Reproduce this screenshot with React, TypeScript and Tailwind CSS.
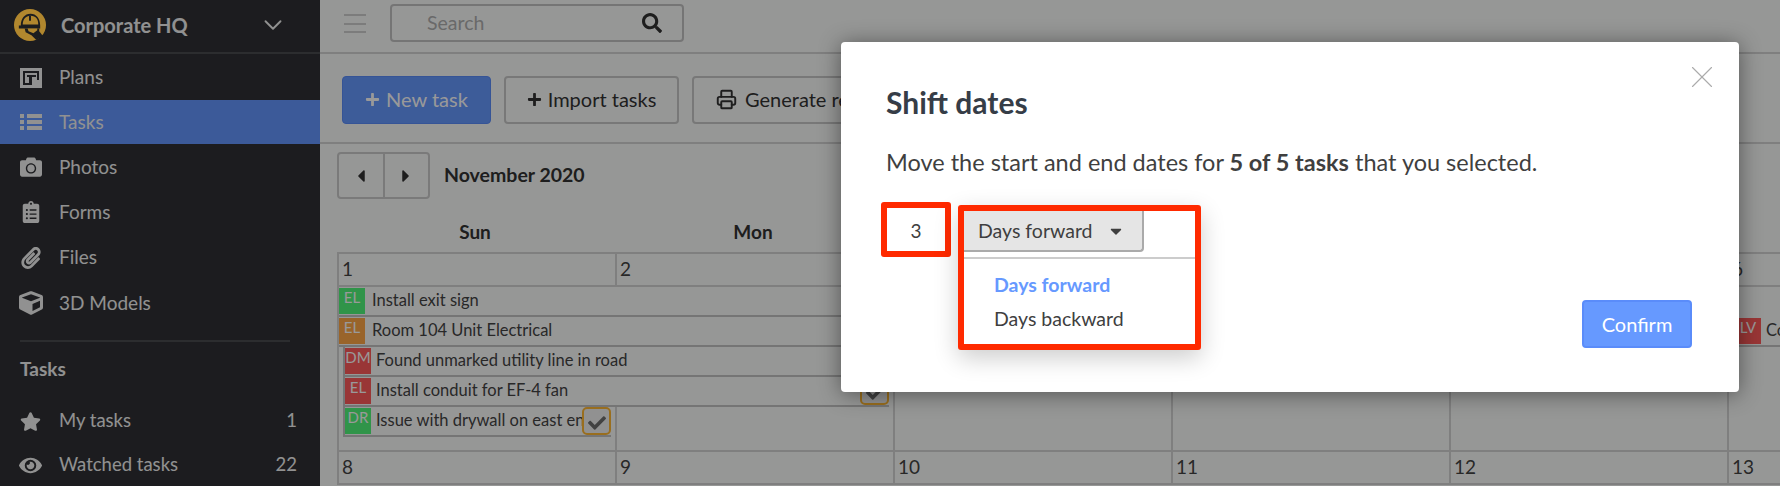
import { ChevronDown, Printer, X } from "lucide-react";
import {
  FaCamera,
  FaCaretDown,
  FaCaretLeft,
  FaCaretRight,
  FaCheck,
  FaClipboardList,
  FaCube,
  FaEye,
  FaPaperclip,
  FaPlus,
  FaSearch,
  FaStar,
} from "react-icons/fa";

function PlansIcon() {
  return (
    <svg width="22" height="20" viewBox="0 0 22 20">
      <rect width="22" height="20" fill="currentColor" />
      <path fill="#2f3034" d="M3 3h16v9h-2V5H5v10h4V9H7V7h9v2h-4v8H3z" />
    </svg>
  );
}

function ListIcon() {
  return (
    <svg width="22" height="16" viewBox="0 0 22 16" fill="currentColor">
      <rect y="0" width="4" height="4" />
      <rect y="6" width="4" height="4" />
      <rect y="12" width="4" height="4" />
      <rect x="7" y="0" width="15" height="4" />
      <rect x="7" y="6" width="15" height="4" />
      <rect x="7" y="12" width="15" height="4" />
    </svg>
  );
}

function Logo() {
  return (
    <svg width="32" height="32" viewBox="0 0 33 33" className="relative z-10 shrink-0">
      <circle cx="16.5" cy="16.5" r="16.5" fill="#b1872e" />
      <path fill="#1c1d1f" d="M7 17c0-7 4-12 10-12s10 5 10 12v3H5v-3z" />
      <path fill="#b1872e" d="M9 16c0-5 3-9 8-9 6 0 8 4 8 9z" />
      <path fill="#1c1d1f" d="M15.5 7h2v5h-2z" />
      <path fill="#1c1d1f" d="M11 20h15v3l4 5-7 4-5-5-6-3z" />
      <path fill="#b1872e" d="M14 20h10v2l-4 3-5-2z" />
    </svg>
  );
}

const navItems = [
  { label: "Plans", icon: <PlansIcon />, height: "h-[45px]" },
  { label: "Tasks", icon: <ListIcon />, height: "h-[44px] bg-[#6496ff]" },
  { label: "Photos", icon: <FaCamera size={22} />, height: "h-[45.5px]" },
  { label: "Forms", icon: <FaClipboardList size={22} />, height: "h-[45.5px]" },
  { label: "Files", icon: <FaPaperclip size={22} />, height: "h-[45px]" },
  { label: "3D Models", icon: <FaCube size={24} />, height: "h-[45.5px]" },
];

function Sidebar() {
  return (
    <aside className="w-[320px] shrink-0 bg-[#2f3034] text-[#f2f2f2]">
      <div className="flex h-[54px] items-center border-b-2 border-[#4a4b4f] pb-[3px] pl-[14px] pr-[32px]">
        <Logo />
        <span className="ml-[15px] flex-1 text-[20px] font-bold">Corporate HQ</span>
        <ChevronDown size={30} strokeWidth={1.5} />
      </div>
      <nav className="pt-[1px]">
        {navItems.map((item) => (
          <div key={item.label} className={"flex items-center " + item.height}>
            <span className="flex w-[59px] shrink-0 justify-center pl-[2px]">{item.icon}</span>
            <span className="text-[19px]">{item.label}</span>
          </div>
        ))}
      </nav>
      <div className="mx-[20px] mt-[14px] w-[270px] border-t-2 border-[#4a4b4f]" />
      <div className="pl-[20px] pt-[13px] text-[19px] font-bold">Tasks</div>
      <div className="pt-[16px]">
        <div className="flex h-[44px] items-center pr-[23px]">
          <span className="flex w-[59px] shrink-0 justify-center pl-[2px]">
            <FaStar size={21} />
          </span>
          <span className="flex-1 text-[18.5px]">My tasks</span>
          <span className="text-[18.5px]">1</span>
        </div>
        <div className="flex h-[44px] items-center pr-[23px]">
          <span className="flex w-[59px] shrink-0 justify-center pl-[2px]">
            <FaEye size={23} />
          </span>
          <span className="flex-1 text-[18.5px]">Watched tasks</span>
          <span className="text-[18.5px]">22</span>
        </div>
      </div>
    </aside>
  );
}

function Topbar() {
  return (
    <div className="flex h-[54px] items-start border-b-2 border-[#d4d4d4] pl-[24px] pt-[4px]">
      <div className="mt-[10px] flex h-[19px] w-[22px] flex-col justify-between">
        <div className="h-[2px] bg-[#cfcfcf]" />
        <div className="h-[2px] bg-[#cfcfcf]" />
        <div className="h-[2px] bg-[#cfcfcf]" />
      </div>
      <div className="ml-[24px] flex h-[38px] w-[294px] items-center justify-between rounded-[4px] border-2 border-[#c4c4c4] pl-[35px] pr-[20px]">
        <span className="text-[19.5px] text-[#b0b0b0]">Search</span>
        <FaSearch size={20} className="text-[#333333]" />
      </div>
    </div>
  );
}

function Toolbar() {
  return (
    <div className="flex h-[90px] items-start gap-[13px] border-b-2 border-[#d4d4d4] pl-[22px] pt-[22px]">
      <button className="flex h-[48px] w-[149px] items-center justify-center gap-[6px] rounded-[4px] border border-[#5a8cfa] bg-[#6699ff] pb-[2px] text-[20px] text-white">
        <FaPlus size={15} />
        New task
      </button>
      <button className="flex h-[48px] w-[175px] items-center justify-center gap-[6px] rounded-[4px] border-2 border-[#c8c8c8] pb-[2px] text-[20px] text-[#333333]">
        <FaPlus size={15} />
        Import tasks
      </button>
      <button className="flex h-[48px] w-[240px] shrink-0 items-center gap-[8px] rounded-[4px] border-2 border-[#c8c8c8] pb-[2px] pl-[22px] text-[20px] text-[#333333]">
        <Printer size={21} strokeWidth={2.2} />
        Generate report
      </button>
    </div>
  );
}

const firstWeekCells = [1, 2, 3, 4, 5, 6];
const secondWeek = [8, 9, 10, 11, 12, 13];
const days = ["Sun", "Mon", "Tue", "Wed", "Thu", "Fri"];

const cellColumns = [
  "col-start-1",
  "col-start-2",
  "col-start-3",
  "col-start-4",
  "col-start-5",
  "col-start-6",
];

const tasks = [
  { code: "EL", color: "bg-[#50f77b]", name: "Install exit sign", span: "col-start-1 col-span-3 row-start-1" },
  { code: "EL", color: "bg-[#ffa746]", name: "Room 104 Unit Electrical", span: "col-start-1 col-span-5 row-start-2" },
  { code: "DM", color: "bg-[#ff5a5a]", name: "Found unmarked utility line in road", span: "col-start-1 col-span-3 row-start-3", inset: true },
  { code: "EL", color: "bg-[#ff5a5a]", name: "Install conduit for EF-4 fan", span: "col-start-1 col-span-2 row-start-4", inset: true, check: true },
  { code: "DR", color: "bg-[#50f77b]", name: "Issue with drywall on east end", span: "col-start-1 col-span-1 row-start-5", inset: true, check: true },
  { code: "LV", color: "bg-[#ff5a5a]", name: "Concrete pour", span: "col-start-6 col-span-1 row-start-2", inset: true },
];

function TaskBar(props: {
  code: string;
  color: string;
  name: string;
  span: string;
  inset?: boolean;
  check?: boolean;
}) {
  return (
    <div
      className={
        "relative flex h-[30px] items-start overflow-hidden border-b-2 border-[#c4c4c4] bg-[#fbfcfb] " +
        props.span +
        (props.inset ? " ml-[6px] mr-[4px] border-l-2" : " ml-[2px]")
      }
    >
      <div
        className={
          "mt-[1px] flex h-[26px] w-[26px] shrink-0 justify-center text-[15px] leading-[19px] text-white " +
          props.color
        }
      >
        {props.code}
      </div>
      <div
        className={
          "whitespace-nowrap text-[16.5px] leading-[26px] text-[#444444] " +
          (props.inset ? "ml-[5px]" : "ml-[7px]")
        }
      >
        {props.name}
      </div>
      {props.check && (
        <div className="absolute bottom-0 right-0 flex h-[28px] w-[29px] items-center justify-center rounded-[5px] border-2 border-[#ffb733] bg-[#f2f2f2] pt-[3px]">
          <FaCheck size={18} className="text-[#6e6e6e]" />
        </div>
      )}
    </div>
  );
}

function Calendar() {
  return (
    <div className="pl-[17px] pt-[8px]">
      <div className="flex items-center">
        <div className="flex h-[47px] w-[93px] rounded-[4px] border-2 border-[#cccccc]">
          <div className="flex flex-1 items-center justify-center border-r-2 border-[#cccccc] text-[#333333]">
            <FaCaretLeft size={20} />
          </div>
          <div className="flex flex-1 items-center justify-center text-[#333333]">
            <FaCaretRight size={20} />
          </div>
        </div>
        <div className="ml-[14px] pb-[2px] text-[19.5px] font-bold text-[#333333]">November 2020</div>
      </div>
      <div className="grid grid-cols-[repeat(6,278px)] pt-[20px]">
        {days.map((d) => (
          <div key={d} className="h-[26px] pr-[2px] text-center text-[19px] font-bold leading-[26px] text-[#333333]">
            {d}
          </div>
        ))}
      </div>
      <div className="mt-[7px] border-t-2 border-[#d4d4d4]">
        <div className="grid grid-cols-[repeat(6,278px)]">
          {firstWeekCells.map((n) => (
            <div
              key={n}
              className="h-[33px] border-b-2 border-l-2 border-[#d4d4d4] pl-[3px] text-[19px] leading-[30px] text-[#444444]"
            >
              {n}
            </div>
          ))}
        </div>
        <div className="grid h-[165px] grid-cols-[repeat(6,278px)] grid-rows-[repeat(5,30px)_15px] border-b-2 border-[#d4d4d4]">
          {cellColumns.map((c) => (
            <div key={c} className={"row-start-1 row-span-6 border-l-2 border-[#d4d4d4] " + c} />
          ))}
          {tasks.map((t) => (
            <TaskBar key={t.name} {...t} />
          ))}
        </div>
        <div className="grid grid-cols-[repeat(6,278px)]">
          {secondWeek.map((n) => (
            <div
              key={n}
              className="h-[33px] border-b-2 border-l-2 border-[#d4d4d4] pl-[3px] text-[19px] leading-[30px] text-[#444444]"
            >
              {n}
            </div>
          ))}
        </div>
      </div>
    </div>
  );
}

function ShiftDatesModal() {
  return (
    <div className="absolute left-[841px] top-[42px] h-[350px] w-[898px] rounded-[4px] bg-white pl-[45px] pr-[46px] pt-[40px] shadow-[0_2px_22px_rgba(0,0,0,0.45)]">
      <X size={38} strokeWidth={0.7} className="absolute right-[18px] top-[16px] text-[#aaaaaa]" />
      <h2 className="text-[30px] font-bold leading-[40px] text-[#363d47]">Shift dates</h2>
      <p className="mt-[22px] whitespace-nowrap text-[23.5px] leading-[36px] text-[#3f3f3f]">
        Move the start and end dates for <b className="font-bold">5 of 5 tasks</b> that you selected.
      </p>
      <div className="-ml-[5px] mt-[22px] flex items-start">
        <div className="flex h-[55px] w-[70px] items-center justify-center rounded-[3px] border-[6px] border-[#ff2a00] pt-[3px] text-[19px] text-[#3f3f3f]">
          3
        </div>
        <div className="relative z-10 ml-[7px] mt-[3px] h-[145px] w-[243px] rounded-[3px] border-[6px] border-[#ff2a00] bg-white shadow-[0_8px_24px_rgba(0,0,0,0.2)]">
          <div className="flex h-[48px] flex-col border-b-2 border-[#cccccc]">
            <button className="flex h-[41px] w-[180px] items-center justify-between rounded-br-[4px] border-b-2 border-r-2 border-[#aaaaaa] bg-[#e5e5e5] pl-[14px] pr-[17px] text-[19.5px] text-[#3f3f3f]">
              Days forward
              <FaCaretDown size={18} />
            </button>
          </div>
          <div className="pl-[30px] pt-[9px] text-[19.5px] leading-[34px]">
            <div className="font-bold text-[#6699ff]">Days forward</div>
            <div className="text-[#3f3f3f]">Days backward</div>
          </div>
        </div>
      </div>
      <button className="absolute right-[47px] top-[258px] h-[48px] w-[110px] rounded-[4px] border-2 border-[#5a8cfa] bg-[#6699ff] text-[20px] text-white">
        Confirm
      </button>
    </div>
  );
}

export default function App() {
  return (
    <div className="relative flex h-[486px] w-[1780px] overflow-hidden bg-[#fbfcfb] font-['Lato',sans-serif]">
      <Sidebar />
      <main className="min-w-0 flex-1">
        <Topbar />
        <Toolbar />
        <Calendar />
      </main>
      {/* Overlay */}
      <div className="absolute inset-0 bg-black/40" />
      <ShiftDatesModal />
    </div>
  );
}
